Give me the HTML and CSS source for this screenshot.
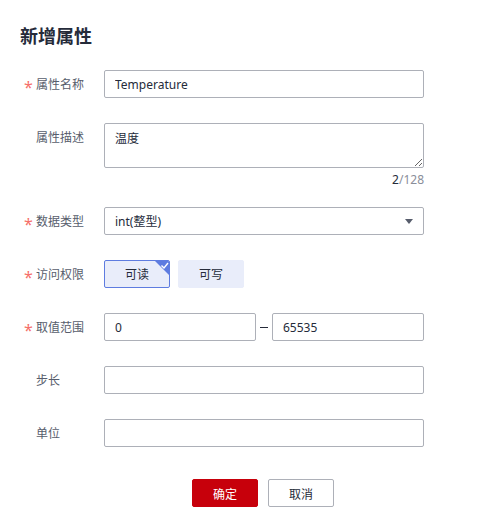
FILE: index.html
```html
<!DOCTYPE html>
<html lang="zh">
<head>
<meta charset="utf-8">
<link rel="stylesheet" href="styles.css">
</head>
<body>
<div class="dialog">
  <h2 class="title">新增属性</h2>
  <div class="row">
    <div class="label"><span class="star">*</span>属性名称</div>
    <input class="field" type="text" value="Temperature">
  </div>
  <div class="row row-desc">
    <div class="label"><span class="star"></span>属性描述</div>
    <div class="desc">
      <textarea class="field area">温度</textarea>
      <div class="counter"><span class="cur">2</span>/128</div>
    </div>
  </div>
  <div class="row">
    <div class="label"><span class="star">*</span>数据类型</div>
    <div class="field select">int(整型)<span class="caret"></span></div>
  </div>
  <div class="row">
    <div class="label"><span class="star">*</span>访问权限</div>
    <div class="toggles">
      <div class="toggle active">可读<svg class="corner" width="16" height="16" viewBox="0 0 16 16"><path d="M0 0H16V16Z" fill="#5e7ce0"/><path d="M7.5 5.5L10 8L14 3" fill="none" stroke="#fff" stroke-width="1.4"/></svg></div>
      <div class="toggle">可写</div>
    </div>
  </div>
  <div class="row">
    <div class="label"><span class="star">*</span>取值范围</div>
    <div class="range">
      <input class="field small" type="text" value="0">
      <span class="dash"></span>
      <input class="field small" type="text" value="65535">
    </div>
  </div>
  <div class="row">
    <div class="label"><span class="star"></span>步长</div>
    <input class="field" type="text" value="">
  </div>
  <div class="row row-last">
    <div class="label"><span class="star"></span>单位</div>
    <input class="field" type="text" value="">
  </div>
  <div class="actions">
    <button class="btn primary">确定</button>
    <button class="btn">取消</button>
  </div>
</div>
</body>
</html>
```
FILE: styles.css
```css
* { box-sizing: border-box; }
html, body { margin: 0; padding: 0; background: #fff; }
body {
  font-family: "Noto Sans", "Noto Sans CJK SC", sans-serif;
  font-size: 12px;
  color: #252b3a;
}
.dialog { padding: 23px 0 0 20px; width: 498px; }
.title {
  margin: 0 0 23px;
  font-size: 18px;
  line-height: 24px;
  font-weight: 700;
  color: #252b3a;
  font-family: "Noto Sans CJK SC", sans-serif;
}
.row { display: flex; align-items: flex-start; margin-bottom: 25px; padding-left: 4px; }
.row-desc { margin-bottom: 15px; }
.row-last { margin-bottom: 32px; }
.label {
  width: 80px;
  height: 28px;
  flex: none;
  line-height: 28px;
  color: #575d6c;
  font-family: "Noto Sans CJK SC", sans-serif;
  display: flex;
  align-items: center;
}
.star {
  width: 12px;
  height: 28px;
  color: #f66f6a;
  font-family: "Noto Sans", sans-serif;
  font-size: 16px;
  line-height: 34px;
  overflow: hidden;
}
.field {
  width: 320px;
  height: 28px;
  border: 1px solid #adb0b8;
  border-radius: 2px;
  padding: 0 10px;
  font: inherit;
  color: #252b3a;
  background: #fff;
  outline: none;
}
.desc { width: 320px; }
.area {
  display: block;
  height: 45px;
  padding: 5px 10px;
  line-height: 18px;
  resize: vertical;
  font-family: "Noto Sans CJK SC", sans-serif;
}
.counter {
  text-align: right;
  line-height: 24px;
  color: #8a8e99;
}
.cur { color: #252b3a; }
.select {
  display: flex;
  align-items: center;
  justify-content: space-between;
  font-family: "Noto Sans", "Noto Sans CJK SC", sans-serif;
}
.caret {
  width: 0; height: 0;
  border-left: 4.5px solid transparent;
  border-right: 4.5px solid transparent;
  border-top: 5px solid #575d6c;
}
.toggles { display: flex; gap: 8px; }
.toggle {
  position: relative;
  width: 66px;
  height: 28px;
  line-height: 26px;
  text-align: center;
  background: #e9edfa;
  border: 1px solid #e9edfa;
  border-radius: 2px;
  color: #252b3a;
  font-family: "Noto Sans CJK SC", sans-serif;
  overflow: hidden;
}
.toggle.active { border-color: #5e7ce0; }
.corner { position: absolute; top: -1px; right: -1px; }
.range { display: flex; align-items: center; }
.small { width: 152px; }
.dash { width: 8px; height: 1px; background: #252b3a; margin: 0 4px; }
.actions { display: flex; gap: 10px; padding-left: 172px; }
.btn {
  width: 66px;
  height: 28px;
  border: 1px solid #adb0b8;
  border-radius: 2px;
  background: #fff;
  color: #252b3a;
  font: 12px "Noto Sans CJK SC", sans-serif;
  padding: 0;
}
.btn.primary { background: #c7000b; border-color: #c7000b; color: #fff; }
```
